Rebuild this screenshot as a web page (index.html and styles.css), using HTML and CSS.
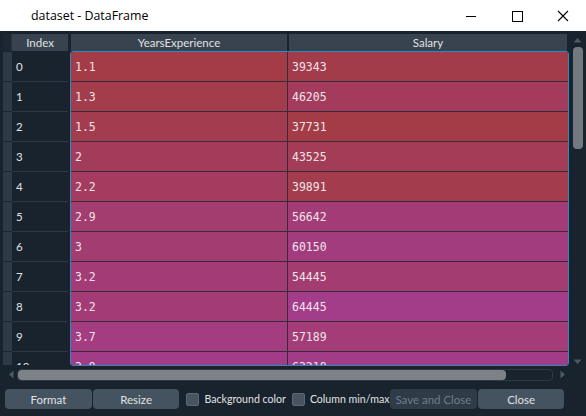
FILE: index.html
```html
<!DOCTYPE html>
<html>
<head>
<meta charset="utf-8">
<title>dataset - DataFrame</title>
<link rel="stylesheet" href="styles.css">
</head>
<body>
<div class="window">
  <div class="titlebar">
    <span class="title">dataset - DataFrame</span>
    <div class="controls">
      <div class="ctl"><svg width="12" height="12" viewBox="0 0 12 12"><line x1="1" y1="6.5" x2="11" y2="6.5" stroke="#000" stroke-width="1"/></svg></div>
      <div class="ctl"><svg width="12" height="12" viewBox="0 0 12 12"><rect x="1.5" y="1.5" width="10" height="10" fill="none" stroke="#000" stroke-width="1"/></svg></div>
      <div class="ctl"><svg width="12" height="12" viewBox="0 0 12 12"><path d="M1 1 L11 11 M11 1 L1 11" stroke="#000" stroke-width="1.1" fill="none"/></svg></div>
    </div>
  </div>

  <div class="main">
    <div class="index-pane">
      <div class="index-head">
        <div class="corner"></div>
        <div class="hcell">Index</div>
      </div>
      <div class="index-body">
        <div class="irow"><div class="strip"></div><div class="icell">0</div></div>
        <div class="irow"><div class="strip"></div><div class="icell">1</div></div>
        <div class="irow"><div class="strip"></div><div class="icell">2</div></div>
        <div class="irow"><div class="strip"></div><div class="icell">3</div></div>
        <div class="irow"><div class="strip"></div><div class="icell">4</div></div>
        <div class="irow"><div class="strip"></div><div class="icell">5</div></div>
        <div class="irow"><div class="strip"></div><div class="icell">6</div></div>
        <div class="irow"><div class="strip"></div><div class="icell">7</div></div>
        <div class="irow"><div class="strip"></div><div class="icell">8</div></div>
        <div class="irow"><div class="strip"></div><div class="icell">9</div></div>
        <div class="irow"><div class="strip"></div><div class="icell">10</div></div>
      </div>
    </div>

    <div class="data-pane">
      <div class="data-head">
        <div class="hcell h-years">YearsExperience</div>
        <div class="hcell h-salary">Salary</div>
      </div>
      <div class="data-body">
        <div class="drow"><div class="dcell" style="background:#a33c46">1.1</div><div class="dcell" style="background:#a33c4a">39343</div></div>
        <div class="drow"><div class="dcell" style="background:#a33c4b">1.3</div><div class="dcell" style="background:#a33c5c">46205</div></div>
        <div class="drow"><div class="dcell" style="background:#a33c4f">1.5</div><div class="dcell" style="background:#a33c46">37731</div></div>
        <div class="drow"><div class="dcell" style="background:#a33c5b">2</div><div class="dcell" style="background:#a33c55">43525</div></div>
        <div class="drow"><div class="dcell" style="background:#a33c5f">2.2</div><div class="dcell" style="background:#a33c4c">39891</div></div>
        <div class="drow"><div class="dcell" style="background:#a33c6f">2.9</div><div class="dcell" style="background:#a33c76">56642</div></div>
        <div class="drow"><div class="dcell" style="background:#a33c71">3</div><div class="dcell" style="background:#a33c7f">60150</div></div>
        <div class="drow"><div class="dcell" style="background:#a33c76">3.2</div><div class="dcell" style="background:#a33c70">54445</div></div>
        <div class="drow"><div class="dcell" style="background:#a33c76">3.2</div><div class="dcell" style="background:#a33c89">64445</div></div>
        <div class="drow"><div class="dcell" style="background:#a33c81">3.7</div><div class="dcell" style="background:#a33c77">57189</div></div>
        <div class="drow"><div class="dcell" style="background:#a33c86">3.9</div><div class="dcell" style="background:#a33c86">63218</div></div>
      </div>
    </div>

    <div class="vscroll">
      <svg class="arrow" width="9" height="6" viewBox="0 0 9 6"><path d="M0.5 5.5 L4.5 1 L8.5 5.5 Z" fill="#4b5866"/></svg>
      <div class="vtrack"><div class="vhandle"></div></div>
      <svg class="arrow" width="9" height="6" viewBox="0 0 9 6"><path d="M0.5 0.5 L4.5 5 L8.5 0.5 Z" fill="#4b5866"/></svg>
    </div>
  </div>

  <div class="hscroll">
    <svg class="harrow" width="6" height="9" viewBox="0 0 6 9"><path d="M5.5 0.5 L1 4.5 L5.5 8.5 Z" fill="#4b5866"/></svg>
    <div class="htrack"><div class="hhandle"></div></div>
    <svg class="harrow" width="6" height="9" viewBox="0 0 6 9"><path d="M0.5 0.5 L5 4.5 L0.5 8.5 Z" fill="#4b5866"/></svg>
  </div>

  <div class="buttons">
    <button class="btn btn-format">Format</button>
    <button class="btn btn-resize">Resize</button>
    <label class="check check-bg"><span class="box"></span>Background color</label>
    <label class="check check-col"><span class="box"></span>Column min/max</label>
    <button class="btn btn-save" disabled>Save and Close</button>
    <button class="btn btn-close">Close</button>
  </div>
</div>
</body>
</html>
```
FILE: styles.css
```css
* { box-sizing: border-box; }
html, body { margin: 0; padding: 0; }
body {
  width: 586px;
  height: 416px;
  overflow: hidden;
  background: #19232d;
  font-family: Lato, "Open Sans", sans-serif;
  font-size: 12px;
  color: #e0e1e3;
}
.window { width: 586px; height: 416px; display: flex; flex-direction: column; }

.titlebar {
  height: 31px;
  flex: none;
  background: #ffffff;
  display: flex;
  align-items: center;
  color: #000;
}
.title { padding-left: 31px; flex: 1; font-family: "Open Sans", Lato, sans-serif; font-size: 12.4px; }
.controls { display: flex; height: 31px; }
.ctl { width: 46px; height: 31px; display: flex; align-items: center; justify-content: center; }

.main {
  height: 335px;
  flex: none;
  display: flex;
  padding: 3px 2px 0 3px;
}

.hcell {
  height: 17px;
  background: #38434f;
  color: #e0e1e3;
  display: flex;
  align-items: center;
  justify-content: center;
  font-size: 11.5px;
  line-height: 17px;
}

.index-pane { width: 65px; margin-right: 2px; display: flex; flex-direction: column; }
.index-head { display: grid; grid-template-columns: 9px 56px; height: 17px; }
.corner { background: #1e2833; border-right: 1px solid #2a3541; }
.index-body { margin-top: 1px; height: 313px; overflow: hidden; }
.irow { display: grid; grid-template-columns: 9px 56px; height: 30px; }
.strip { background: #2e3a46; border-bottom: 1px solid #1c2630; }
.icell {
  background: #19232d;
  border-bottom: 1px solid #2c3844;
  padding-left: 4px;
  display: flex;
  align-items: center;
  font-size: 11.5px;
}

.data-pane { width: 499px; margin-right: 2px; display: flex; flex-direction: column; }
.data-head { display: flex; height: 17px; padding: 0 2px 0 1px; }
.h-years { width: 216px; margin-right: 2px; }
.h-salary { flex: 1; }
.data-body {
  height: 315px;
  border: 1px solid #2a8bc4;
  border-radius: 3px;
  overflow: hidden;
}
.drow { display: grid; grid-template-columns: 217px 1fr; height: 30px; }
.dcell {
  border-bottom: 1px solid #372b39;
  padding-left: 4px;
  display: flex;
  align-items: center;
  font-family: "DejaVu Sans Mono", monospace;
  font-size: 11.5px;
  color: #efe4ea;
}
.dcell:first-child { border-right: 1px solid #372b39; }

.vscroll {
  width: 13px;
  height: 331px;
  display: flex;
  flex-direction: column;
  align-items: center;
  padding-top: 3px;
}
.arrow { flex: none; }
.vtrack { flex: 1; width: 12px; margin: 3px 0; padding: 1px; }
.vhandle { width: 10px; height: 102px; background: #737980; border-radius: 4px; }

.hscroll {
  height: 15px;
  flex: none;
  display: flex;
  align-items: center;
  padding: 0 20px 0 8px;
  margin-top: 1px;
}
.harrow { flex: none; }
.htrack {
  flex: 1;
  height: 12px;
  margin: 0 7px 0 3px;
  border: 1px solid #2e3a46;
  border-radius: 4px;
}
.hhandle { width: 488px; height: 10px; background: #7d8287; border-radius: 4px; }

.buttons {
  flex: 1;
  display: flex;
  align-items: flex-start;
  padding: 7px 22px 0 5px;
}
.btn {
  height: 20px;
  border: none;
  border-radius: 4px;
  background: #455260;
  color: #e0e1e3;
  font-family: Lato, "Open Sans", sans-serif;
  font-size: 11.5px;
  padding: 0;
}
.btn-format { width: 87px; margin-right: 1px; }
.btn-resize { width: 87px; margin-right: 7px; }
.btn-save { width: 88px; margin-left: auto; margin-right: 1px; background: #2f3b47; color: #6f7c88; }
.btn-close { width: 86px; }
.check { display: flex; align-items: center; height: 20px; white-space: nowrap; font-size: 10.6px; }
.check-bg { margin-right: 6px; }
.box {
  width: 13px;
  height: 13px;
  border: 1px solid #5c6874;
  background: #4a5460;
  border-radius: 2px;
  margin-right: 5px;
}
```
